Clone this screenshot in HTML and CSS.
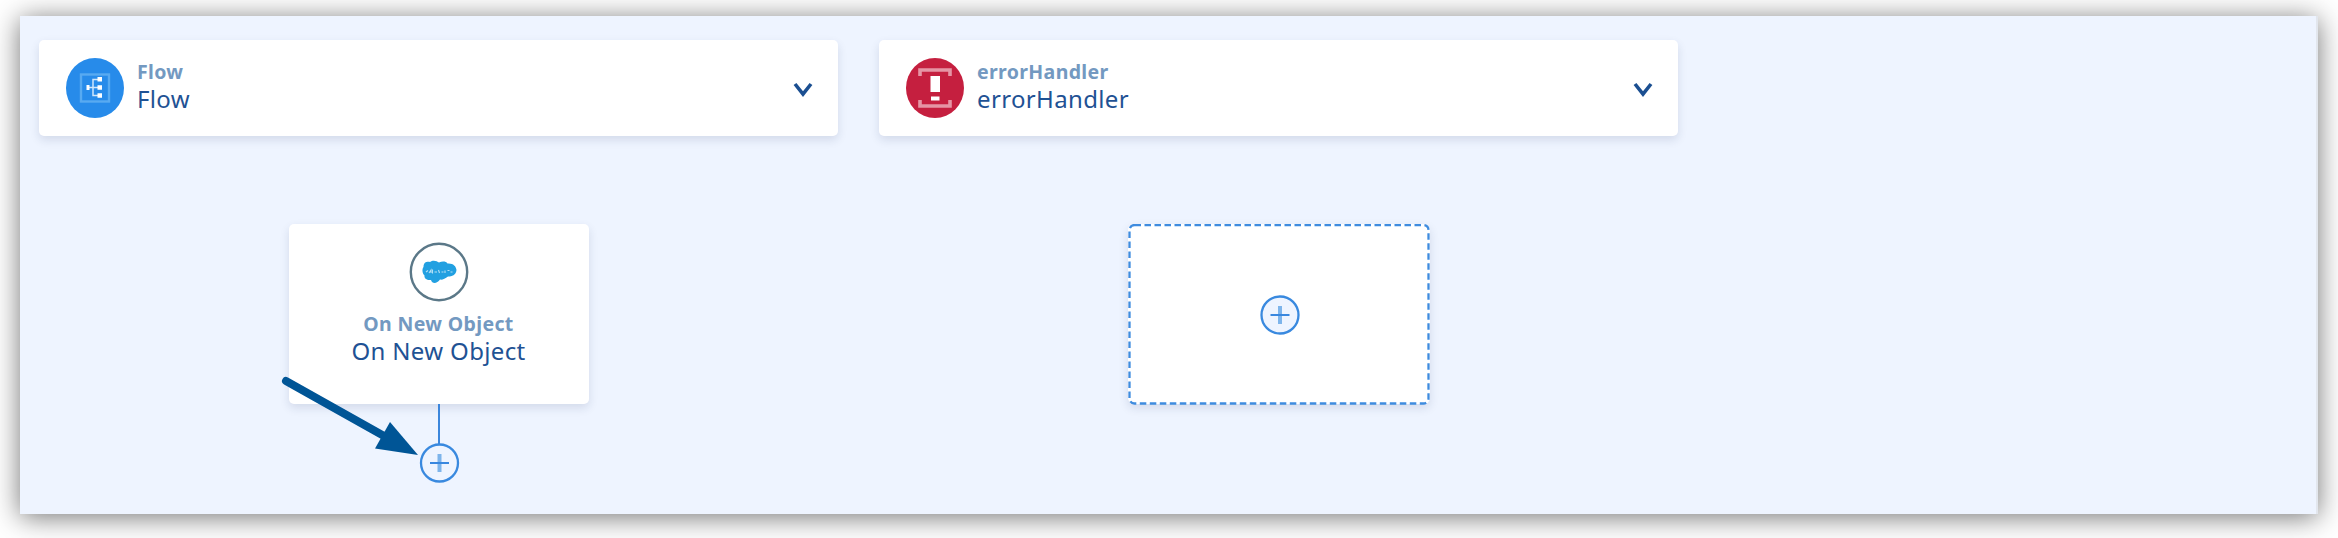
FILE: index.html
```html
<!DOCTYPE html>
<html lang="en">
<head>
<meta charset="utf-8">
<title>Flow designer</title>
<link rel="stylesheet" href="styles.css">
</head>
<body>
<main class="canvas">
  <section class="column">
    <header class="card">
      <svg class="badge" viewBox="0 0 58 60">
        <ellipse cx="29" cy="30" rx="29" ry="30" fill="#278bea"/>
        <rect x="15" y="16.500" width="28" height="27" fill="none" stroke="#58aaf1" stroke-width="2.400"/>
        <path d="M21 29.500H35M33 21.500H27V37.500H33" fill="none" stroke="#cfe6fc" stroke-width="1.500"/>
        <path d="M20.500 27h3v5h-3zM31.500 19h4.500v4.500h-4.500zM31.500 27.300h4.500v4.500h-4.500zM31.500 35.300h4.500v4.500h-4.500z" fill="#fff"/>
      </svg>
      <div class="labels">
        <span class="kind">Flow</span>
        <span class="name">Flow</span>
      </div>
      <svg class="chevron" viewBox="0 0 20 18"><path d="M2 3L10 13L18 3" fill="none" stroke="#1b4f91" stroke-width="3.600"/></svg>
    </header>
    <div class="branch">
      <article class="node">
        <svg class="connector" viewBox="0 0 60 60">
          <circle cx="30" cy="30" r="28.200" fill="#fff" stroke="#5b7888" stroke-width="2.400"/>
          <path d="M14.500 25C14.500 20 18 19.500 21 20C24 17.500 28 19 30 20.500C33 19 37 19 38.500 21.500C44 21 47 24 47.500 28C47 33 43 34.500 39 34.500C36 37 33 38 31 37.500C28 42 23 42 22 38C18 38.500 15 36.500 15.500 33.500C13 31 13 27 14.500 25Z" fill="#22a0e1"/>
          <path d="M17 30l2-1.500M20 31l2-3v3M23.500 27.500v4M25.500 30h2.500M29.500 28l1 3M32.500 30h2M36 28.500v2.500M38.500 28.500h2M41.500 30h2" fill="none" stroke="#b3dff5" stroke-width="1.100"/>
        </svg>
        <span class="kind">On New Object</span>
        <span class="name">On New Object</span>
      </article>
      <span class="link"></span>
      <svg class="add" viewBox="0 0 40 40"><circle cx="20.500" cy="20" r="18.500"/><path class="plus-v" d="M20.500 11V29"/><path class="plus-h" d="M11 20H30"/></svg>
    </div>
  </section>
  <section class="column">
    <header class="card">
      <svg class="badge" viewBox="0 0 58 60">
        <ellipse cx="29" cy="30" rx="29" ry="30" fill="#c51f3f"/>
        <path d="M14 18V12H44V18M14 42V48H44V42" fill="none" stroke="#e595a5" stroke-width="3.600"/>
        <path d="M24.500 18h9.500v16h-9.500zM25 38.500h8.500v4h-8.500z" fill="#fff"/>
      </svg>
      <div class="labels">
        <span class="kind">errorHandler</span>
        <span class="name">errorHandler</span>
      </div>
      <svg class="chevron" viewBox="0 0 20 18"><path d="M2 3L10 13L18 3" fill="none" stroke="#1b4f91" stroke-width="3.600"/></svg>
    </header>
    <div class="branch">
      <div class="dropzone">
        <svg class="outline" viewBox="0 0 302 181"><rect x="1.500" y="1" width="299" height="178.500" rx="5"/></svg>
        <svg class="add" viewBox="0 0 40 40"><circle cx="21" cy="20" r="18.500"/><path class="plus-v" d="M21 11V29"/><path class="plus-h" d="M11.500 20H30.500"/></svg>
      </div>
    </div>
  </section>
  <svg class="pointer" viewBox="0 0 140 84">
    <path d="M6 7L104 62" stroke="#005596" stroke-width="8" stroke-linecap="round"/>
    <path d="M110 48L138 81L95 74.500Z" fill="#005596"/>
  </svg>
</main>
</body>
</html>
```
FILE: styles.css
```css
* { box-sizing: border-box; }

body {
  margin: 0;
  padding: 16px 20px 24px;
  height: 538px;
  overflow: hidden;
  background: #fff;
  font-family: "Noto Sans", "Open Sans", sans-serif;
}

.canvas {
  position: relative;
  display: flex;
  gap: 41px;
  height: 498px;
  padding: 24px 19px;
  background: #eef4ff;
  border-right: 2px solid #e2e6ed;
  box-shadow: 0 3px 26px rgba(0, 0, 0, 0.55);
}

.column { width: 799px; }

.card {
  display: flex;
  align-items: center;
  height: 96px;
  padding: 0 25px 0 27px;
  background: #fff;
  border-radius: 5px;
  box-shadow: 0 4px 10px rgba(30, 50, 90, 0.13);
}

.badge { width: 58px; height: 60px; }

.labels {
  display: flex;
  flex: 1;
  flex-direction: column;
  align-items: flex-start;
  padding: 0 0 5px 13px;
}

.kind {
  font-size: 19.500px;
  font-weight: 700;
  line-height: 26px;
  letter-spacing: 0.350px;
  color: #7399c1;
  white-space: nowrap;
}

.name {
  font-size: 24px;
  line-height: 28px;
  letter-spacing: 0.350px;
  color: #1f5294;
  white-space: nowrap;
}

.chevron { width: 20px; height: 18px; margin-top: 4px; }

.branch {
  display: flex;
  flex-direction: column;
  align-items: center;
  padding-top: 88px;
}

.node {
  display: flex;
  flex-direction: column;
  align-items: center;
  width: 300px;
  height: 180px;
  padding-top: 18px;
  background: #fff;
  border-radius: 5px;
  box-shadow: 0 4px 10px rgba(30, 50, 90, 0.13);
}

.connector { width: 60px; height: 60px; margin-bottom: 9px; }

.link { width: 2px; height: 40px; background: #3b86dc; }

.add { width: 40px; height: 40px; margin-top: -1px; overflow: visible; }
.add circle { fill: #eef4ff; stroke: #3989df; stroke-width: 2.300; }
.plus-v { stroke: #7db4eb; stroke-width: 4; }
.plus-h { stroke: #3987df; stroke-width: 2; }

.dropzone {
  position: relative;
  display: flex;
  align-items: center;
  justify-content: center;
  width: 302px;
  height: 180px;
  background: #fff;
  border-radius: 6px;
  box-shadow: 0 4px 10px rgba(30, 50, 90, 0.13);
}

.dropzone .add { margin-top: 2px; }

.outline { position: absolute; inset: 0; width: 302px; height: 181px; }
.outline rect { fill: none; stroke: #3f8cdf; stroke-width: 2.300; stroke-dasharray: 6.500 3.500; }

.pointer { position: absolute; left: 260px; top: 358px; width: 140px; height: 84px; }
```
